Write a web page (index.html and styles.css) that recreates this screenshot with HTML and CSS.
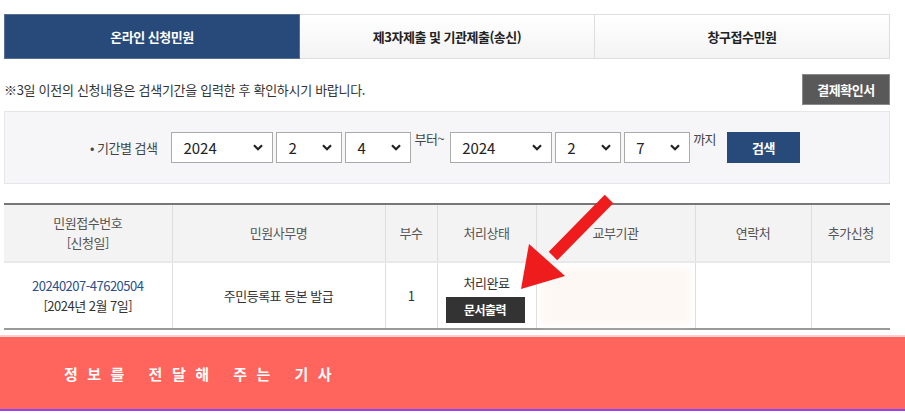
FILE: index.html
```html
<!DOCTYPE html>
<html lang="ko">
<head>
    <meta charset="UTF-8">
    <meta name="viewport" content="width=device-width, initial-scale=1.0">
    <title>민원신청내역</title>
    <link rel="stylesheet" href="styles.css">
</head>
<body>
    <div class="wrap">
        <ul class="tabs">
            <li class="tab on">온라인 신청민원</li>
            <li class="tab">제3자제출 및 기관제출(송신)</li>
            <li class="tab">창구접수민원</li>
        </ul>

        <div class="notice-row">
            <p class="notice">※3일 이전의 신청내용은 검색기간을 입력한 후 확인하시기 바랍니다.</p>
            <a class="btn-gray">결제확인서</a>
        </div>

        <div class="search-box">
            <span class="search-label">• 기간별 검색</span>
            <div class="sel sel-year"><span>2024</span><svg width="10" height="7" viewBox="0 0 10 7"><path d="M1 1.2 L5 5.2 L9 1.2" fill="none" stroke="#222" stroke-width="2.2"/></svg></div>
            <div class="sel"><span>2</span><svg width="10" height="7" viewBox="0 0 10 7"><path d="M1 1.2 L5 5.2 L9 1.2" fill="none" stroke="#222" stroke-width="2.2"/></svg></div>
            <div class="sel"><span>4</span><svg width="10" height="7" viewBox="0 0 10 7"><path d="M1 1.2 L5 5.2 L9 1.2" fill="none" stroke="#222" stroke-width="2.2"/></svg></div>
            <span class="word">부터~</span>
            <div class="sel sel-year"><span>2024</span><svg width="10" height="7" viewBox="0 0 10 7"><path d="M1 1.2 L5 5.2 L9 1.2" fill="none" stroke="#222" stroke-width="2.2"/></svg></div>
            <div class="sel"><span>2</span><svg width="10" height="7" viewBox="0 0 10 7"><path d="M1 1.2 L5 5.2 L9 1.2" fill="none" stroke="#222" stroke-width="2.2"/></svg></div>
            <div class="sel"><span>7</span><svg width="10" height="7" viewBox="0 0 10 7"><path d="M1 1.2 L5 5.2 L9 1.2" fill="none" stroke="#222" stroke-width="2.2"/></svg></div>
            <span class="word">까지</span>
            <a class="btn-search">검색</a>
        </div>

        <div class="table-wrap">
            <table class="list">
                <colgroup>
                    <col style="width:168px">
                    <col style="width:213px">
                    <col style="width:52px">
                    <col style="width:99px">
                    <col style="width:159px">
                    <col style="width:116px">
                    <col>
                </colgroup>
                <thead>
                    <tr>
                        <th>민원접수번호<br>[신청일]</th>
                        <th>민원사무명</th>
                        <th>부수</th>
                        <th>처리상태</th>
                        <th>교부기관</th>
                        <th>연락처</th>
                        <th>추가신청</th>
                    </tr>
                </thead>
                <tbody>
                    <tr>
                        <td><a class="num">20240207-47620504</a><br>[2024년 2월 7일]</td>
                        <td>주민등록표 등본 발급</td>
                        <td>1</td>
                        <td class="status">처리완료<a class="btn-print">문서출력</a></td>
                        <td><div class="blurred"></div></td>
                        <td></td>
                        <td></td>
                    </tr>
                </tbody>
            </table>

            <svg class="arrow" width="100" height="100" viewBox="0 0 100 100">
                <line x1="92" y1="5" x2="36" y2="62" stroke="#ee1c1c" stroke-width="12"/>
                <polygon points="4,95 12,50 48,82" fill="#ee1c1c"/>
            </svg>
        </div>
    </div>

    <div class="banner">
        <p>정보를 전달해 주는 기사</p>
    </div>
</body>
</html>
```

FILE: styles.css
```css
* {
    margin: 0;
    padding: 0;
    box-sizing: border-box;
}

body {
    font-family: "Noto Sans CJK KR", "Noto Sans", sans-serif;
    font-size: 13px;
    color: #333;
    background-color: #fff;
    letter-spacing: -0.5px;
}

a {
    text-decoration: none;
}

.wrap {
    width: 890px;
    padding: 14px 0 0 4px;
}

.tabs {
    display: flex;
    list-style: none;
    height: 45px;
}

.tabs .tab {
    flex: 1;
    display: flex;
    align-items: center;
    justify-content: center;
    font-weight: bold;
    font-size: 13px;
    color: #222;
    border: 1px solid #ddd;
    border-left: 0;
    background: linear-gradient(#fff, #f3f3f3);
}

.tabs .tab.on {
    color: #fff;
    border: 1px solid #5a6f8f;
    background: #284a7a;
}

.notice-row {
    display: flex;
    align-items: center;
    justify-content: space-between;
    margin-top: 15px;
    height: 31px;
}

.notice {
    font-size: 13px;
    color: #333;
    letter-spacing: -0.3px;
}

.btn-gray {
    width: 88px;
    height: 31px;
    line-height: 29px;
    text-align: center;
    font-weight: bold;
    font-size: 13px;
    color: #fff;
    background-color: #595959;
    border: 1px solid #8a8a8a;
}

.search-box {
    display: flex;
    align-items: center;
    justify-content: center;
    gap: 3px;
    margin-top: 6px;
    height: 73px;
    padding-right: 4px;
    background-color: #f6f6f8;
    border: 1px solid #e6e6ea;
}

.search-label {
    margin-right: 8px;
    font-size: 13px;
    color: #444;
}

.sel {
    display: flex;
    align-items: center;
    justify-content: space-between;
    width: 66px;
    height: 31px;
    padding: 0 9px 0 11px;
    font-size: 15px;
    color: #222;
    background-color: #fff;
    border: 1px solid #aaa;
    letter-spacing: 0;
}

.sel-year {
    width: 102px;
    margin-left: 3px;
}

.word {
    font-size: 13px;
    color: #444;
    align-self: flex-start;
    margin-top: 17px;
}

.btn-search {
    width: 73px;
    height: 31px;
    line-height: 31px;
    margin-left: 8px;
    text-align: center;
    font-weight: bold;
    font-size: 13px;
    color: #fff;
    background-color: #284a7a;
}

.table-wrap {
    position: relative;
    margin-top: 19px;
}

.list {
    width: 100%;
    border-collapse: collapse;
    table-layout: fixed;
    border-top: 2px solid #777;
    border-bottom: 2px solid #999;
}

.list th {
    height: 58px;
    font-weight: normal;
    font-size: 13px;
    line-height: 20px;
    color: #555;
    background-color: #f3f3f3;
    border-left: 1px solid #ddd;
    border-bottom: 2px solid #e8e8e8;
}

.list td {
    height: 67px;
    text-align: center;
    font-size: 13px;
    line-height: 20px;
    color: #333;
    border-left: 1px solid #ddd;
}

.list th:first-child,
.list td:first-child {
    border-left: 0;
}

.list .num {
    color: #2b4f8a;
}

.list .status {
    padding-top: 4px;
}

.btn-print {
    display: block;
    width: 79px;
    height: 26px;
    line-height: 26px;
    margin: 4px 0 0 8px;
    font-weight: bold;
    font-size: 12px;
    color: #fff;
    background-color: #333;
}

.blurred {
    height: 56px;
    margin: 0 5px 0 4px;
    background-color: #fdf8f3;
    filter: blur(3px);
}

.arrow {
    position: absolute;
    top: -9px;
    left: 513px;
}

.banner {
    margin-top: 5px;
    height: 76px;
    display: flex;
    align-items: center;
    padding-left: 64px;
    background-color: #ff655d;
    border-top: 2px solid #ffd0cc;
    border-bottom: 2px solid #8b45f5;
}

.banner p {
    font-size: 15px;
    font-weight: bold;
    color: #fff;
    letter-spacing: 9.5px;
    word-spacing: 1px;
}
```
